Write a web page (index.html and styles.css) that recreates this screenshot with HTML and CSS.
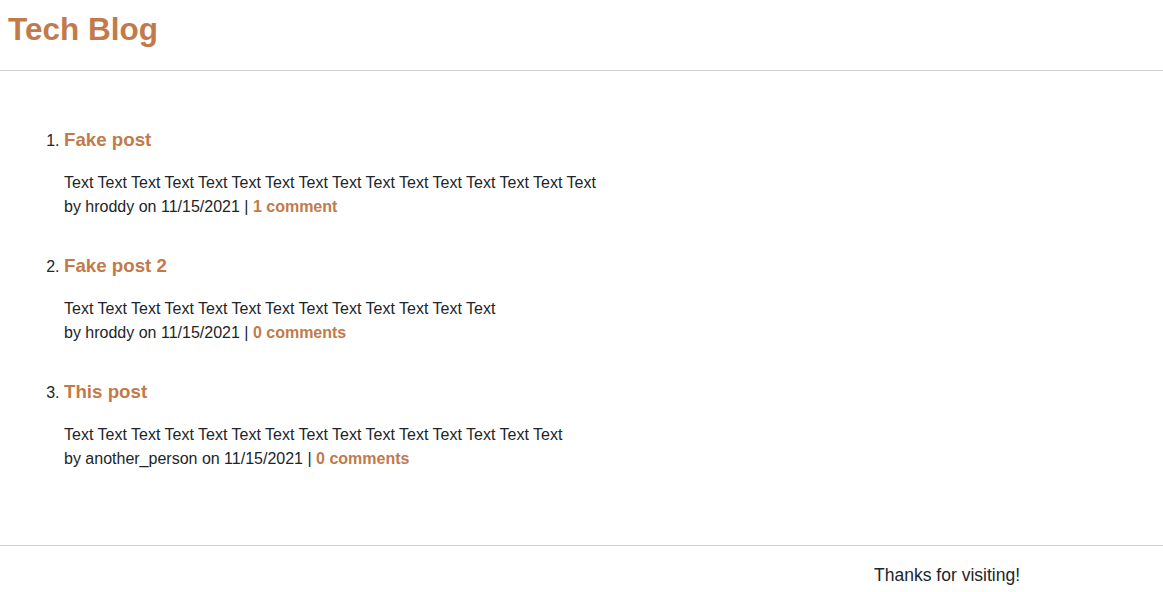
FILE: index.html
```html
<!DOCTYPE html>
<html lang="en">
<head>
<meta charset="utf-8">
<title>Tech Blog</title>
<link rel="stylesheet" href="styles.css">
</head>
<body>
<header class="site-header">
  <h1 class="site-title">Tech Blog</h1>
</header>
<main class="content">
  <ol class="post-list">
    <li class="post">
      <h3 class="post-title"><a href="#">Fake post</a></h3>
      <p class="post-body">Text Text Text Text Text Text Text Text Text Text Text Text Text Text Text Text<br>
      by hroddy on 11/15/2021 | <a class="post-comments" href="#">1 comment</a></p>
    </li>
    <li class="post">
      <h3 class="post-title"><a href="#">Fake post 2</a></h3>
      <p class="post-body">Text Text Text Text Text Text Text Text Text Text Text Text Text<br>
      by hroddy on 11/15/2021 | <a class="post-comments" href="#">0 comments</a></p>
    </li>
    <li class="post">
      <h3 class="post-title"><a href="#">This post</a></h3>
      <p class="post-body">Text Text Text Text Text Text Text Text Text Text Text Text Text Text Text<br>
      by another_person on 11/15/2021 | <a class="post-comments" href="#">0 comments</a></p>
    </li>
  </ol>
</main>
<footer class="site-footer">
  <p class="footer-text">Thanks for visiting!</p>
</footer>
</body>
</html>
```
FILE: styles.css
```css
html, body {
  margin: 0;
  padding: 0;
}
body {
  font-family: "Liberation Sans", Arial, sans-serif;
  font-size: 16px;
  line-height: 24px;
  color: #212529;
  background: #fff;
}
a {
  color: #c27a4b;
  text-decoration: none;
  font-weight: bold;
}
.site-header {
  height: 70px;
  border-bottom: 1px solid #cfcfcf;
  padding: 0 8px;
}
.site-title {
  margin: 0;
  padding-top: 10px;
  font-size: 31.5px;
  line-height: 38px;
  font-weight: bold;
  color: #c27a4b;
}
.content {
  height: 474px;
  padding: 0 0 0 24px;
}
.post-list {
  margin: 0;
  padding: 57px 0 0 40px;
}
.post {
  margin-bottom: 35px;
}
.post-title {
  margin: 0 0 19px;
  font-size: 18.72px;
  line-height: 24px;
}
.post-body {
  margin: 0;
}
.site-footer {
  border-top: 1px solid #cfcfcf;
  display: flex;
  justify-content: flex-end;
  padding-right: 143px;
}
.footer-text {
  margin: 0;
  padding-top: 17px;
  font-size: 17.5px;
  line-height: 24px;
}
```
